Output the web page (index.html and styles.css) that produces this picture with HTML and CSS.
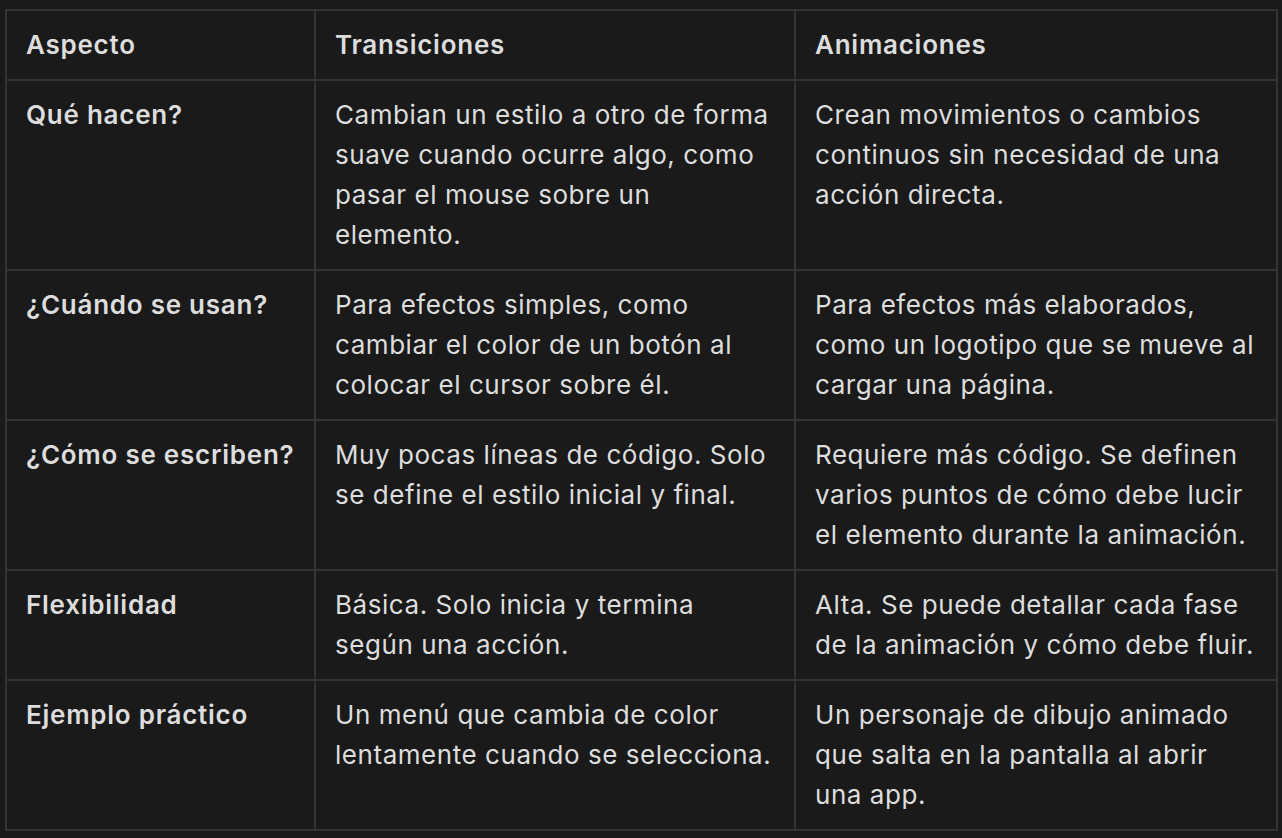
FILE: index.html
```html
<!DOCTYPE html>
<html lang="es">
<head>
<meta charset="utf-8">
<link rel="stylesheet" href="styles.css">
</head>
<body>
<table class="cmp">
  <colgroup>
    <col class="c1"><col class="c2"><col class="c3">
  </colgroup>
  <thead>
    <tr><th>Aspecto</th><th>Transiciones</th><th>Animaciones</th></tr>
  </thead>
  <tbody>
    <tr>
      <td class="k">Qué hacen?</td>
      <td>Cambian un estilo a otro de forma suave cuando ocurre algo, como pasar el mouse sobre un elemento.</td>
      <td>Crean movimientos o cambios continuos sin necesidad de una acción directa.</td>
    </tr>
    <tr>
      <td class="k">¿Cuándo se usan?</td>
      <td>Para efectos simples, como cambiar el color de un botón al colocar el cursor sobre él.</td>
      <td>Para efectos más elaborados, como un logotipo que se mueve al cargar una página.</td>
    </tr>
    <tr>
      <td class="k">¿Cómo se escriben?</td>
      <td>Muy pocas líneas de código. Solo se define el estilo inicial y final.</td>
      <td>Requiere más código. Se definen varios puntos de cómo debe lucir el elemento durante la animación.</td>
    </tr>
    <tr>
      <td class="k">Flexibilidad</td>
      <td>Básica. Solo inicia y termina según una acción.</td>
      <td>Alta. Se puede detallar cada fase de la animación y cómo debe fluir.</td>
    </tr>
    <tr>
      <td class="k">Ejemplo práctico</td>
      <td>Un menú que cambia de color lentamente cuando se selecciona.</td>
      <td>Un personaje de dibujo animado que salta en la pantalla al abrir una app.</td>
    </tr>
  </tbody>
</table>
</body>
</html>
```
FILE: styles.css
```css
html, body {
  margin: 0;
  background: #1a1a1a;
}
body {
  padding: 9px 0 0 5px;
  font-family: Inter, "Noto Sans", sans-serif;
  color: #dddddd;
  font-size: 26px;
  letter-spacing: 0.55px;
  line-height: 40px;
}
.cmp {
  border-collapse: collapse;
  table-layout: fixed;
  width: 1271px;
}
.c1 { width: 309px; }
.c2 { width: 480px; }
.c3 { width: 482px; }
.cmp th, .cmp td {
  border: 2px solid #343434;
  padding: 14px 17px 14px 19px;
  text-align: left;
  vertical-align: top;
}
.cmp th, .cmp td.k {
  font-weight: 600;
  letter-spacing: 0.75px;
}
```
